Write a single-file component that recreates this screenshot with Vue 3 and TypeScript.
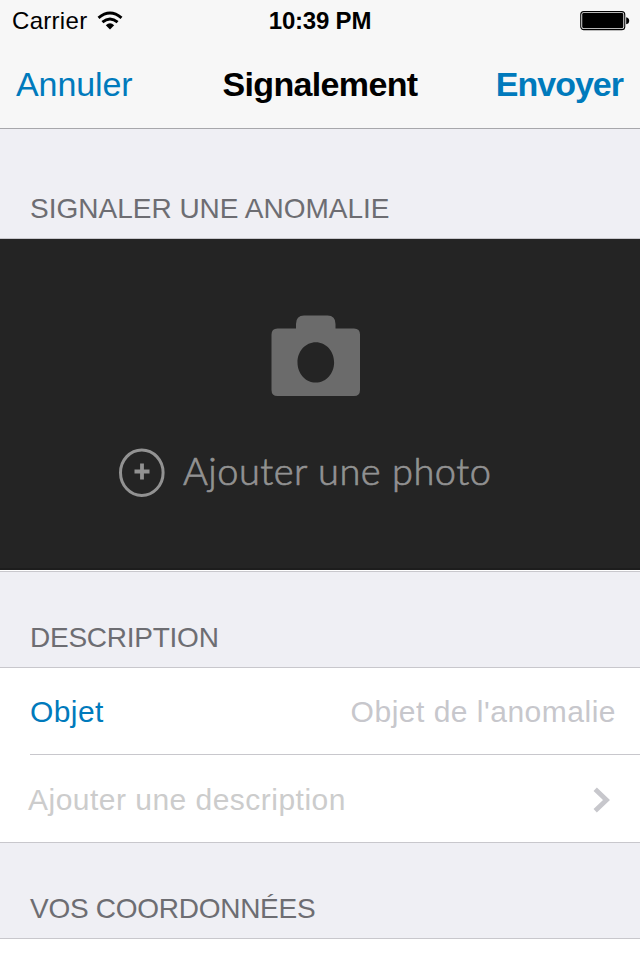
<script setup lang="ts">
import { ref } from 'vue'

const carrier = ref<string>('Carrier')
const time = ref<string>('10:39 PM')
const subject = ref<string>('')
</script>

<template>
  <main class="screen">
    <header class="top">
      <div class="status">
        <div class="signal">
          <span class="carrier">{{ carrier }}</span>
          <svg class="wifi" width="26" height="20" viewBox="0 0 26 20">
            <g fill="none" stroke="#000" stroke-width="2.900">
              <path d="M1.500 6.900 Q13 -2.700 24.500 6.900" />
              <path d="M5.400 11.200 Q13 4.800 20.600 11.200" />
            </g>
            <path d="M8.800 14.200 Q13 10.400 17.200 14.200 L13 18.400Z" />
          </svg>
        </div>
        <span class="time">{{ time }}</span>
        <svg class="battery" width="50" height="20" viewBox="0 0 50 20">
          <rect x="0.75" y="0.65" width="44" height="18" rx="3" fill="none" stroke="#000" stroke-width="1.100" />
          <rect x="2.200" y="2.100" width="41.100" height="15.100" rx="1.400" />
          <path d="M46.200 6.200 Q49.200 6.700 49.200 9.700 Q49.200 12.700 46.200 13.200Z" />
        </svg>
      </div>
      <nav class="nav">
        <a class="cancel">Annuler</a>
        <h1 class="title">Signalement</h1>
        <a class="send">Envoyer</a>
      </nav>
    </header>

    <h2 class="heading heading-first">SIGNALER UNE ANOMALIE</h2>
    <section class="photo">
      <svg class="camera" width="90" height="82" viewBox="0 0 90 82">
        <path
          fill="#6b6b6b"
          fill-rule="evenodd"
          d="M6.500 13.500H25V9Q25 .5 33 .5H56.500Q64.500 .5 64.500 9V13.500H83Q89 13.500 89 19.500V75Q89 81 83 81H6.500Q.5 81 .5 75V19.500Q.5 13.500 6.500 13.500ZM44.800 27.300C34.600 27.300 26.500 36.200 26.500 47.400S34.600 67.500 44.800 67.500 63.100 58.600 63.100 47.400 55 27.300 44.800 27.300Z"
        />
      </svg>
      <div class="add">
        <svg class="plus" width="46" height="50" viewBox="0 0 46 50">
          <ellipse cx="22.800" cy="24.700" rx="21.300" ry="22.700" fill="none" stroke="#929292" stroke-width="3" />
          <path d="M15.500 23.500H30.500M23 15.500V31.500" stroke="#929292" stroke-width="3.800" />
        </svg>
        <span class="add-text">Ajouter une photo</span>
      </div>
    </section>

    <h2 class="heading heading-desc">DESCRIPTION</h2>
    <section class="form">
      <label class="row">
        <span class="label">Objet</span>
        <input v-model="subject" class="field" type="text" placeholder="Objet de l'anomalie" />
      </label>
      <div class="row row-more">
        <span class="more">Ajouter une description</span>
        <svg class="chevron" width="18" height="28" viewBox="0 0 18 28">
          <path d="M2.200 3.200 L13.500 14 L2.200 24.800" fill="none" stroke="#c7c7cc" stroke-width="4.800" />
        </svg>
      </div>
    </section>

    <h2 class="heading heading-contact">VOS COORDONNÉES</h2>
    <section class="contact"></section>
  </main>
</template>

<style>
body {
  margin: 0;
  background: #fff;
}
</style>

<style scoped>
.screen {
  display: flex;
  flex-direction: column;
  width: 640px;
  height: 960px;
  overflow: hidden;
  background: #efeff4;
  font-family: 'Liberation Sans', Arial, sans-serif;
  white-space: nowrap;
}
.screen * {
  box-sizing: border-box;
}
.top {
  height: 129px;
  flex: none;
  background: #f7f7f7;
  border-bottom: 1px solid #a7a7ab;
}
.status,
.nav {
  display: grid;
  grid-template-columns: 1fr auto 1fr;
}
.status {
  height: 40px;
  padding: 0 10px 0 12px;
  font-size: 24px;
  line-height: 42px;
}
.signal {
  display: flex;
}
.carrier {
  letter-spacing: 0.3px;
}
.wifi {
  margin: 11px 0 0 10px;
}
.time {
  font-weight: 700;
  letter-spacing: -0.2px;
  margin-right: 2px;
}
.battery {
  justify-self: end;
  margin-top: 11px;
}
.nav {
  height: 88px;
  padding: 0 16px;
  font-size: 34px;
  line-height: 89px;
}
.title {
  margin: 0;
  font-size: 34px;
  font-weight: 700;
  letter-spacing: -0.65px;
}
.cancel,
.send {
  color: #007abc;
}
.cancel {
  letter-spacing: -0.1px;
}
.send {
  justify-self: end;
  margin-right: 1px;
  font-weight: 700;
  letter-spacing: -1px;
}
.heading {
  display: flex;
  align-items: flex-end;
  flex: none;
  margin: 0;
  padding: 0 30px 13px;
  border-bottom: 1px solid #c8c7cc;
  color: #6d6d72;
  font-size: 28px;
  font-weight: 400;
  line-height: 32px;
}
.heading-first {
  height: 110px;
}
.photo {
  display: flex;
  flex-direction: column;
  flex: none;
  height: 333px;
  padding-top: 76px;
  background: #242424;
  border-bottom: 1px solid #c8c7cc;
  box-shadow: inset 0 -1px #fff, inset 0 -3px #1d1d1d;
}
.camera {
  margin-left: 271px;
}
.add {
  display: flex;
  margin: 51px 0 0 119px;
}
.add-text {
  margin-left: 18px;
  color: #929292;
  font-family: Lato, sans-serif;
  font-size: 38px;
  font-weight: 300;
  line-height: 44px;
  letter-spacing: 0.5px;
  -webkit-text-stroke: 0.7px #929292;
}
.heading-desc {
  height: 96px;
  letter-spacing: -0.25px;
}
.form {
  flex: none;
  background: #fff;
  border-bottom: 1px solid #c8c7cc;
  font-size: 30px;
}
.row {
  display: flex;
  align-items: center;
  justify-content: space-between;
  height: 87px;
  margin-left: 30px;
  padding-top: 2px;
  padding-right: 24px;
  border-bottom: 1px solid #c8c7cc;
}
.label {
  color: #007abc;
  letter-spacing: 0.4px;
}
.field {
  width: 400px;
  padding: 0;
  border: 0;
  outline: 0;
  background: none;
  font: inherit;
  text-align: right;
  letter-spacing: 0.5px;
}
.field::placeholder {
  color: #c7c7cc;
  opacity: 1;
}
.row-more {
  margin-left: 28px;
  padding-right: 29px;
  border: 0;
}
.more {
  color: #cccccc;
  letter-spacing: 0.48px;
}
.heading-contact {
  height: 96px;
  letter-spacing: -0.27px;
}
.contact {
  flex: 1;
  background: #fff;
}
</style>
